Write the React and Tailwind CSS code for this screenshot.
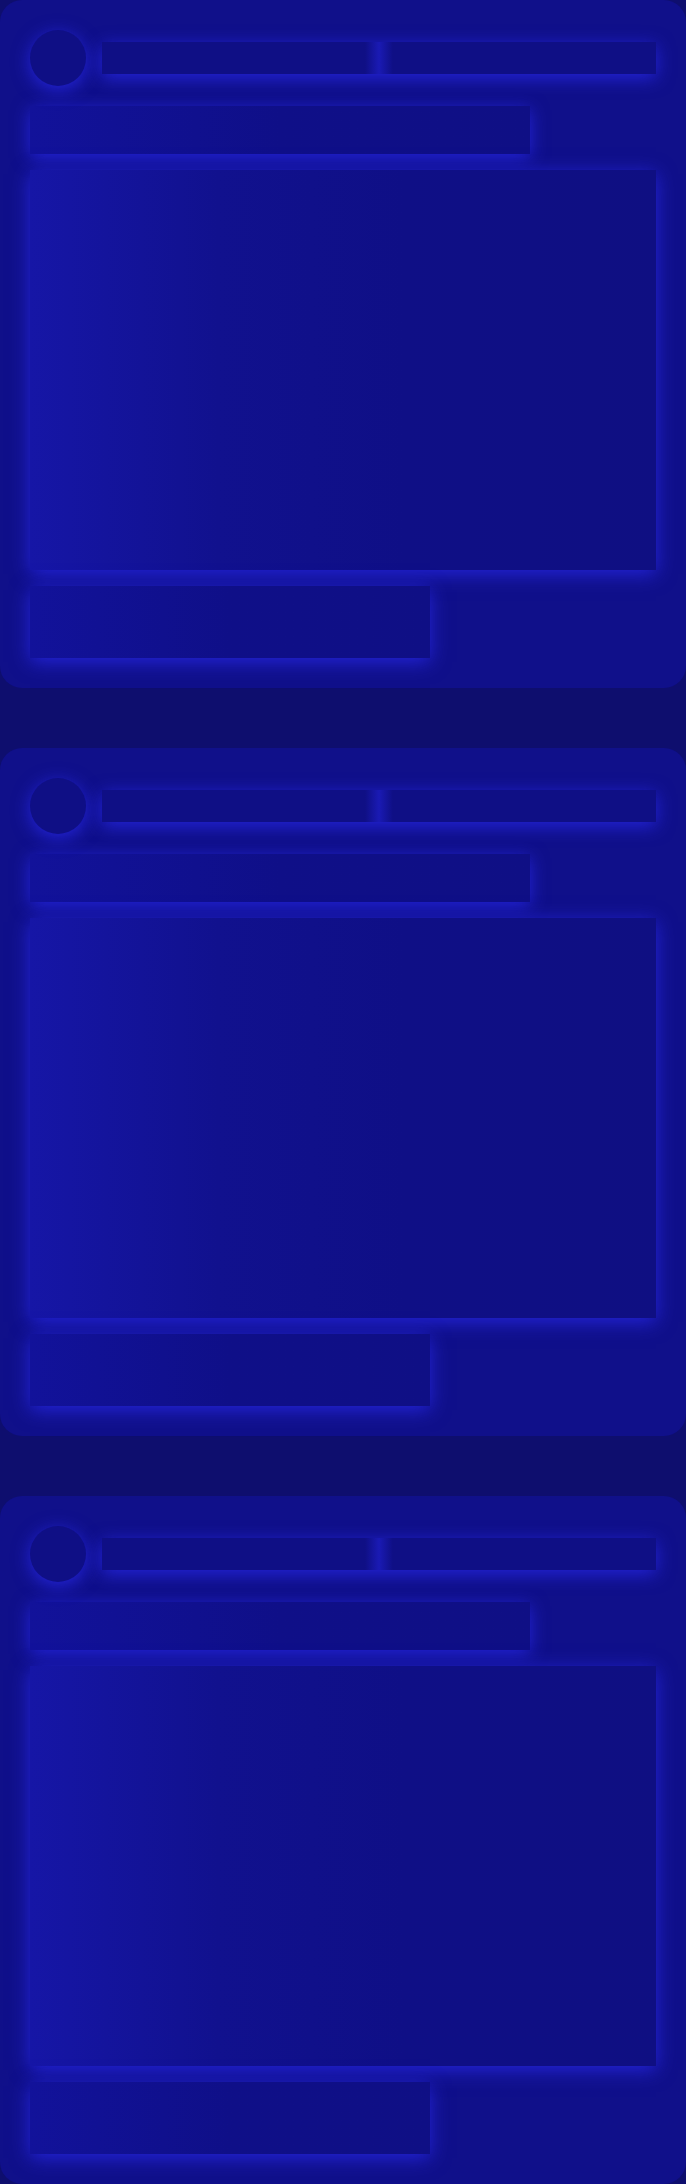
import React from 'react';

const glow = 'shadow-[0_4px_18px_rgba(38,38,225,0.9)]';

function SkeletonCard() {
  return (
    <div className="rounded-[22px] bg-[#10108a] p-[30px]">
      <div className="flex items-center gap-4">
        <div className={`h-14 w-14 shrink-0 rounded-full bg-[#0f0f85] ${glow}`} />
        <div className={`h-8 flex-1 bg-[linear-gradient(90deg,#0f0f85_47.5%,#1a1ab4_50%,#0f0f85_52.5%)] ${glow}`} />
      </div>
      <div className={`mt-5 h-12 w-[500px] bg-gradient-to-r from-[#12129a] via-[#0f0f88] to-[#0f0f85] ${glow}`} />
      <div className={`mt-4 h-[400px] w-full bg-[linear-gradient(90deg,#1616a6_0%,#11118e_30%,#0f0f86_60%,#0f0f82_100%)] ${glow}`} />
      <div className={`mt-4 h-[72px] w-[400px] bg-gradient-to-r from-[#12129a] via-[#0f0f88] to-[#0f0f85] ${glow}`} />
    </div>
  );
}

export default function App() {
  return (
    <div className="min-h-screen bg-[#0e0e6e] flex flex-col gap-[60px]">
      <SkeletonCard />
      <SkeletonCard />
      <SkeletonCard />
    </div>
  );
}
